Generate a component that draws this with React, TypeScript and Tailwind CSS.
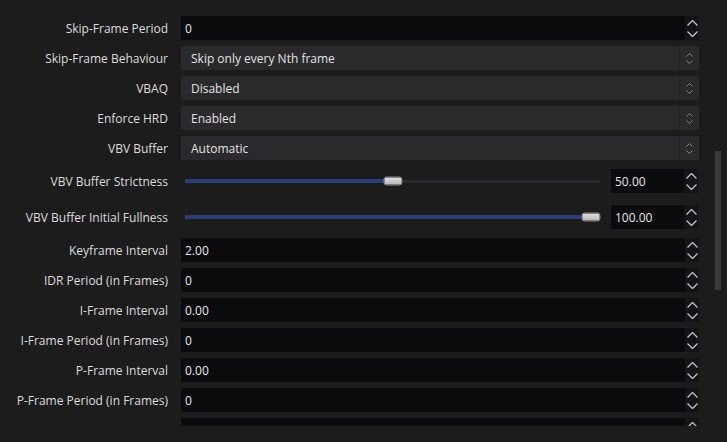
import React from 'react';

type Row =
  | { kind: 'spin'; label: string; value: string }
  | { kind: 'combo'; label: string; value: string }
  | { kind: 'slider'; label: string; value: string; pct: number };

const rows: Row[] = [
  { kind: 'spin', label: 'Skip-Frame Period', value: '0' },
  { kind: 'combo', label: 'Skip-Frame Behaviour', value: 'Skip only every Nth frame' },
  { kind: 'combo', label: 'VBAQ', value: 'Disabled' },
  { kind: 'combo', label: 'Enforce HRD', value: 'Enabled' },
  { kind: 'combo', label: 'VBV Buffer', value: 'Automatic' },
  { kind: 'slider', label: 'VBV Buffer Strictness', value: '50.00', pct: 50 },
  { kind: 'slider', label: 'VBV Buffer Initial Fullness', value: '100.00', pct: 100 },
  { kind: 'spin', label: 'Keyframe Interval', value: '2.00' },
  { kind: 'spin', label: 'IDR Period (in Frames)', value: '0' },
  { kind: 'spin', label: 'I-Frame Interval', value: '0.00' },
  { kind: 'spin', label: 'I-Frame Period (in Frames)', value: '0' },
  { kind: 'spin', label: 'P-Frame Interval', value: '0.00' },
  { kind: 'spin', label: 'P-Frame Period (in Frames)', value: '0' },
  { kind: 'spin', label: '', value: '' },
];

// стрелки спинбокса
const SpinArrows = () => (
  <div className="w-[14px] h-full bg-[#141418] flex flex-col items-center justify-center gap-[5px]">
    <svg width="11" height="6" viewBox="0 0 11 6" fill="none">
      <path d="M0.5 5.5 L5.5 0.5 L10.5 5.5" stroke="#c4c4c8" strokeWidth="1.3" />
    </svg>
    <svg width="11" height="6" viewBox="0 0 11 6" fill="none">
      <path d="M0.5 0.5 L5.5 5.5 L10.5 0.5" stroke="#c4c4c8" strokeWidth="1.3" />
    </svg>
  </div>
);

const SpinBox = ({ value, w }: { value: string; w?: string }) => (
  <div className={`flex h-[24px] ${w ?? 'flex-1'}`}>
    <div className="flex-1 bg-[#0b0b0d] flex items-center pl-[4px] pt-[2px] text-[#e6e6e6]">{value}</div>
    <SpinArrows />
  </div>
);

const ComboBox = ({ value }: { value: string }) => (
  <div className="flex-1 flex h-[24px] bg-[#2a2a2c]">
    <div className="flex-1 flex items-center pl-[10px] pt-[2px] text-[#e2e2e2]">{value}</div>
    <div className="w-[20px] border-l border-[#232325] flex flex-col items-center justify-center gap-[3px]">
      <svg width="7" height="4" viewBox="0 0 7 4" fill="none">
        <path d="M0.5 3.5 L3.5 0.5 L6.5 3.5" stroke="#86868a" strokeWidth="1" />
      </svg>
      <svg width="7" height="4" viewBox="0 0 7 4" fill="none">
        <path d="M0.5 0.5 L3.5 3.5 L6.5 0.5" stroke="#86868a" strokeWidth="1" />
      </svg>
    </div>
  </div>
);

const Slider = ({ pct }: { pct: number }) => (
  <div className="flex-1 relative h-[30px] flex items-center pl-[4px]">
    <div className="relative w-full h-[4px]">
      <div className="absolute inset-y-[0.5px] left-0 right-0 bg-[#2b2b2d]" />
      <div className="absolute inset-y-0 left-0 bg-[#2c3c77]" style={{ width: `${pct}%` }} />
      <div
        className="absolute top-1/2 -translate-y-1/2 -translate-x-1/2 w-[19px] h-[9px] rounded-[3px] bg-gradient-to-b from-[#e0e0e0] to-[#b8b8b8] border border-[#8c8c8c]"
        style={{ left: `calc(${pct}% * (1 - 19 / 415) + 9.5px)` }}
      />
    </div>
  </div>
);

export default function App() {
  return (
    <div
      className="w-[727px] h-[442px] bg-[#1c1c1c] flex overflow-hidden text-[12px]"
      style={{ fontFamily: '"Open Sans", "Noto Sans", sans-serif' }}
    >
      <div className="w-[699px] h-[426px] overflow-hidden">
        <div className="flex flex-col gap-[6px] pt-[16px]">
          {rows.map((r, i) => (
            <div key={i} className={`flex items-center ${r.kind === 'slider' ? 'h-[30px]' : 'h-[24px]'}`}>
              <div className="w-[168px] pt-[2px] text-right text-[#dcdcdc] whitespace-nowrap">{r.label}</div>
              <div className="flex-1 ml-[13px] flex items-center">
                {r.kind === 'spin' && <SpinBox value={r.value} />}
                {r.kind === 'combo' && <ComboBox value={r.value} />}
                {r.kind === 'slider' && (
                  <>
                    <Slider pct={r.pct} />
                    <div className="ml-[11px]">
                      <SpinBox value={r.value} w="w-[87px]" />
                    </div>
                    <div className="w-[1px]" />
                  </>
                )}
              </div>
            </div>
          ))}
        </div>
      </div>
      {/* полоса прокрутки */}
      <div className="ml-[16px] w-[6px]">
        <div className="mt-[151px] h-[139px] bg-[#3a3a3a]" />
      </div>
    </div>
  );
}
